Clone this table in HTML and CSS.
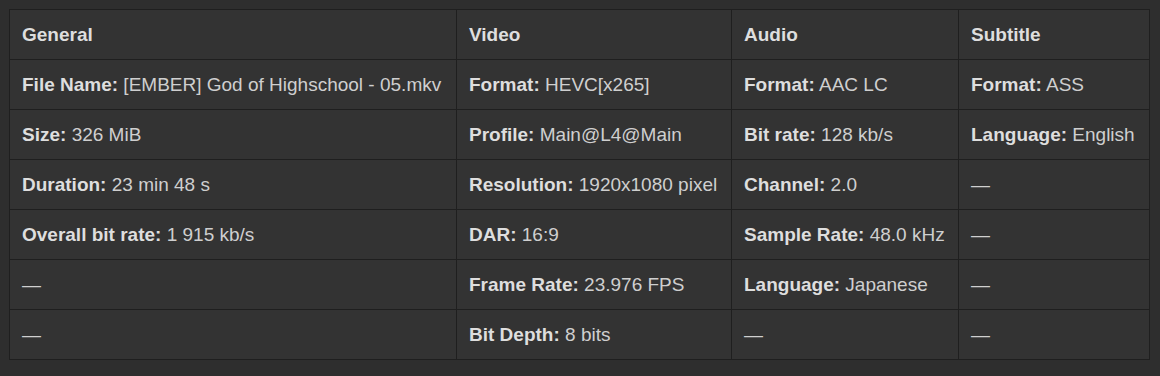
FILE: index.html
```html
<!DOCTYPE html>
<html>
<head>
<meta charset="utf-8">
<link rel="stylesheet" href="styles.css">
</head>
<body>
<table class="media">
  <colgroup>
    <col class="c1"><col class="c2"><col class="c3"><col class="c4">
  </colgroup>
  <thead>
    <tr><th>General</th><th>Video</th><th>Audio</th><th>Subtitle</th></tr>
  </thead>
  <tbody>
    <tr>
      <td><b>File Name:</b> [EMBER] God of Highschool - 05.mkv</td>
      <td><b>Format:</b> HEVC[x265]</td>
      <td><b>Format:</b> AAC LC</td>
      <td><b>Format:</b> ASS</td>
    </tr>
    <tr>
      <td><b>Size:</b> 326 MiB</td>
      <td><b>Profile:</b> Main@L4@Main</td>
      <td><b>Bit rate:</b> 128 kb/s</td>
      <td><b>Language:</b> English</td>
    </tr>
    <tr>
      <td><b>Duration:</b> 23 min 48 s</td>
      <td><b>Resolution:</b> 1920x1080 pixel</td>
      <td><b>Channel:</b> 2.0</td>
      <td>—</td>
    </tr>
    <tr>
      <td><b>Overall bit rate:</b> 1 915 kb/s</td>
      <td><b>DAR:</b> 16:9</td>
      <td><b>Sample Rate:</b> 48.0 kHz</td>
      <td>—</td>
    </tr>
    <tr>
      <td>—</td>
      <td><b>Frame Rate:</b> 23.976 FPS</td>
      <td><b>Language:</b> Japanese</td>
      <td>—</td>
    </tr>
    <tr>
      <td>—</td>
      <td><b>Bit Depth:</b> 8 bits</td>
      <td>—</td>
      <td>—</td>
    </tr>
  </tbody>
</table>
</body>
</html>
```
FILE: styles.css
```css
html, body {
  margin: 0;
  padding: 0;
  background: #2e2e2e;
}
body {
  padding: 9px;
  font-family: "Liberation Sans", Arial, sans-serif;
  font-size: 19px;
  color: #cfcfcf;
}
.media {
  border-collapse: collapse;
  table-layout: fixed;
  width: 1140px;
  background: #333333;
  border: 1px solid #1f1f1f;
}
.c1 { width: 447px; }
.c2 { width: 275px; }
.c3 { width: 227px; }
.c4 { width: 191px; }
.media th,
.media td {
  border: 1px solid #1f1f1f;
  height: 50px;
  box-sizing: border-box;
  padding: 0 0 0 12px;
  text-align: left;
  vertical-align: middle;
  white-space: nowrap;
  overflow: hidden;
}
.media th {
  font-weight: bold;
  color: #dedede;
}
.media b {
  color: #dedede;
}
```
